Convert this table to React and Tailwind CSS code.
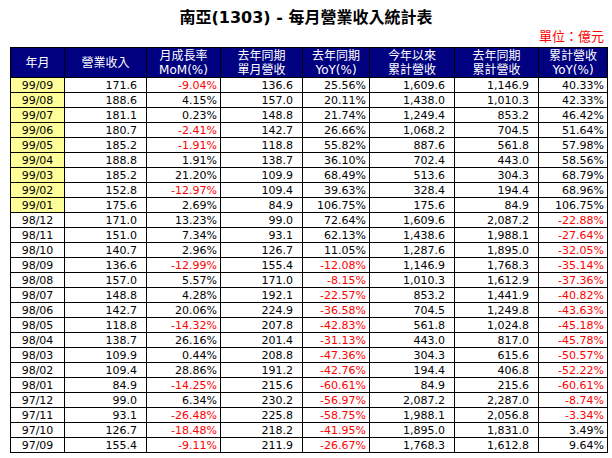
const rows = [
  ["99/09", "171.6", "-9.04%", "136.6", "25.56%", "1,609.6", "1,146.9", "40.33%"],
  ["99/08", "188.6", "4.15%", "157.0", "20.11%", "1,438.0", "1,010.3", "42.33%"],
  ["99/07", "181.1", "0.23%", "148.8", "21.74%", "1,249.4", "853.2", "46.42%"],
  ["99/06", "180.7", "-2.41%", "142.7", "26.66%", "1,068.2", "704.5", "51.64%"],
  ["99/05", "185.2", "-1.91%", "118.8", "55.82%", "887.6", "561.8", "57.98%"],
  ["99/04", "188.8", "1.91%", "138.7", "36.10%", "702.4", "443.0", "58.56%"],
  ["99/03", "185.2", "21.20%", "109.9", "68.49%", "513.6", "304.3", "68.79%"],
  ["99/02", "152.8", "-12.97%", "109.4", "39.63%", "328.4", "194.4", "68.96%"],
  ["99/01", "175.6", "2.69%", "84.9", "106.75%", "175.6", "84.9", "106.75%"],
  ["98/12", "171.0", "13.23%", "99.0", "72.64%", "1,609.6", "2,087.2", "-22.88%"],
  ["98/11", "151.0", "7.34%", "93.1", "62.13%", "1,438.6", "1,988.1", "-27.64%"],
  ["98/10", "140.7", "2.96%", "126.7", "11.05%", "1,287.6", "1,895.0", "-32.05%"],
  ["98/09", "136.6", "-12.99%", "155.4", "-12.08%", "1,146.9", "1,768.3", "-35.14%"],
  ["98/08", "157.0", "5.57%", "171.0", "-8.15%", "1,010.3", "1,612.9", "-37.36%"],
  ["98/07", "148.8", "4.28%", "192.1", "-22.57%", "853.2", "1,441.9", "-40.82%"],
  ["98/06", "142.7", "20.06%", "224.9", "-36.58%", "704.5", "1,249.8", "-43.63%"],
  ["98/05", "118.8", "-14.32%", "207.8", "-42.83%", "561.8", "1,024.8", "-45.18%"],
  ["98/04", "138.7", "26.16%", "201.4", "-31.13%", "443.0", "817.0", "-45.78%"],
  ["98/03", "109.9", "0.44%", "208.8", "-47.36%", "304.3", "615.6", "-50.57%"],
  ["98/02", "109.4", "28.86%", "191.2", "-42.76%", "194.4", "406.8", "-52.22%"],
  ["98/01", "84.9", "-14.25%", "215.6", "-60.61%", "84.9", "215.6", "-60.61%"],
  ["97/12", "99.0", "6.34%", "230.2", "-56.97%", "2,087.2", "2,287.0", "-8.74%"],
  ["97/11", "93.1", "-26.48%", "225.8", "-58.75%", "1,988.1", "2,056.8", "-3.34%"],
  ["97/10", "126.7", "-18.48%", "218.2", "-41.95%", "1,895.0", "1,831.0", "3.49%"],
  ["97/09", "155.4", "-9.11%", "211.9", "-26.67%", "1,768.3", "1,612.8", "9.64%"],
];

const headers = [
  ["年月"],
  ["營業收入"],
  ["月成長率", "MoM(%)"],
  ["去年同期", "單月營收"],
  ["去年同期", "YoY(%)"],
  ["今年以來", "累計營收"],
  ["去年同期", "累計營收"],
  ["累計營收", "YoY(%)"],
];

const widths = ["w-[54px]", "w-[82px]", "w-[74px]", "w-[82px]", "w-[67px]", "w-[85px]", "w-[84px]", "w-[69px]"];

export default function App() {
  return (
    <div className="w-[612px] h-[458px] bg-white overflow-hidden font-['DejaVu_Sans','Noto_Sans_CJK_TC',sans-serif] text-black">
      <div className="pt-[8px] text-center text-[16px] leading-[20px] font-bold">
        南亞(1303) - 每月營業收入統計表
      </div>
      <div className="pr-[8px] pt-[2px] text-right text-[13px] leading-[14px] text-[#ff0000]">
        單位：億元
      </div>
      <table className="ml-[10px] mt-[3px] w-[598px] table-fixed border-collapse text-[11px]">
        <colgroup>
          {widths.map((w, i) => (
            <col key={i} className={w} />
          ))}
        </colgroup>
        <thead>
          <tr className="h-[30px]">
            {headers.map((h, i) => (
              <th
                key={i}
                className="border border-black bg-[#000080] p-0 text-center align-middle text-[12px] font-normal leading-[14px] text-white"
              >
                {h.map((line, j) => (
                  <div key={j}>{line}</div>
                ))}
              </th>
            ))}
          </tr>
        </thead>
        <tbody>
          {rows.map((r) => {
            const current = r[0].startsWith("99");
            return (
              <tr key={r[0]} className="h-[15px]">
                {r.map((v, i) => {
                  const pct = v.endsWith("%");
                  const neg = v.startsWith("-");
                  let cls = "border border-black p-0 leading-[13px] whitespace-nowrap ";
                  if (i === 0) {
                    cls += "text-center " + (current ? "bg-[#ffff99]" : "bg-white");
                  } else {
                    cls += "text-right " + (pct ? "pr-[3px] " : "pr-[9px] ");
                    cls += neg ? "text-[#ff0000]" : "text-black";
                  }
                  return (
                    <td key={i} className={cls}>
                      {v}
                    </td>
                  );
                })}
              </tr>
            );
          })}
        </tbody>
      </table>
    </div>
  );
}
